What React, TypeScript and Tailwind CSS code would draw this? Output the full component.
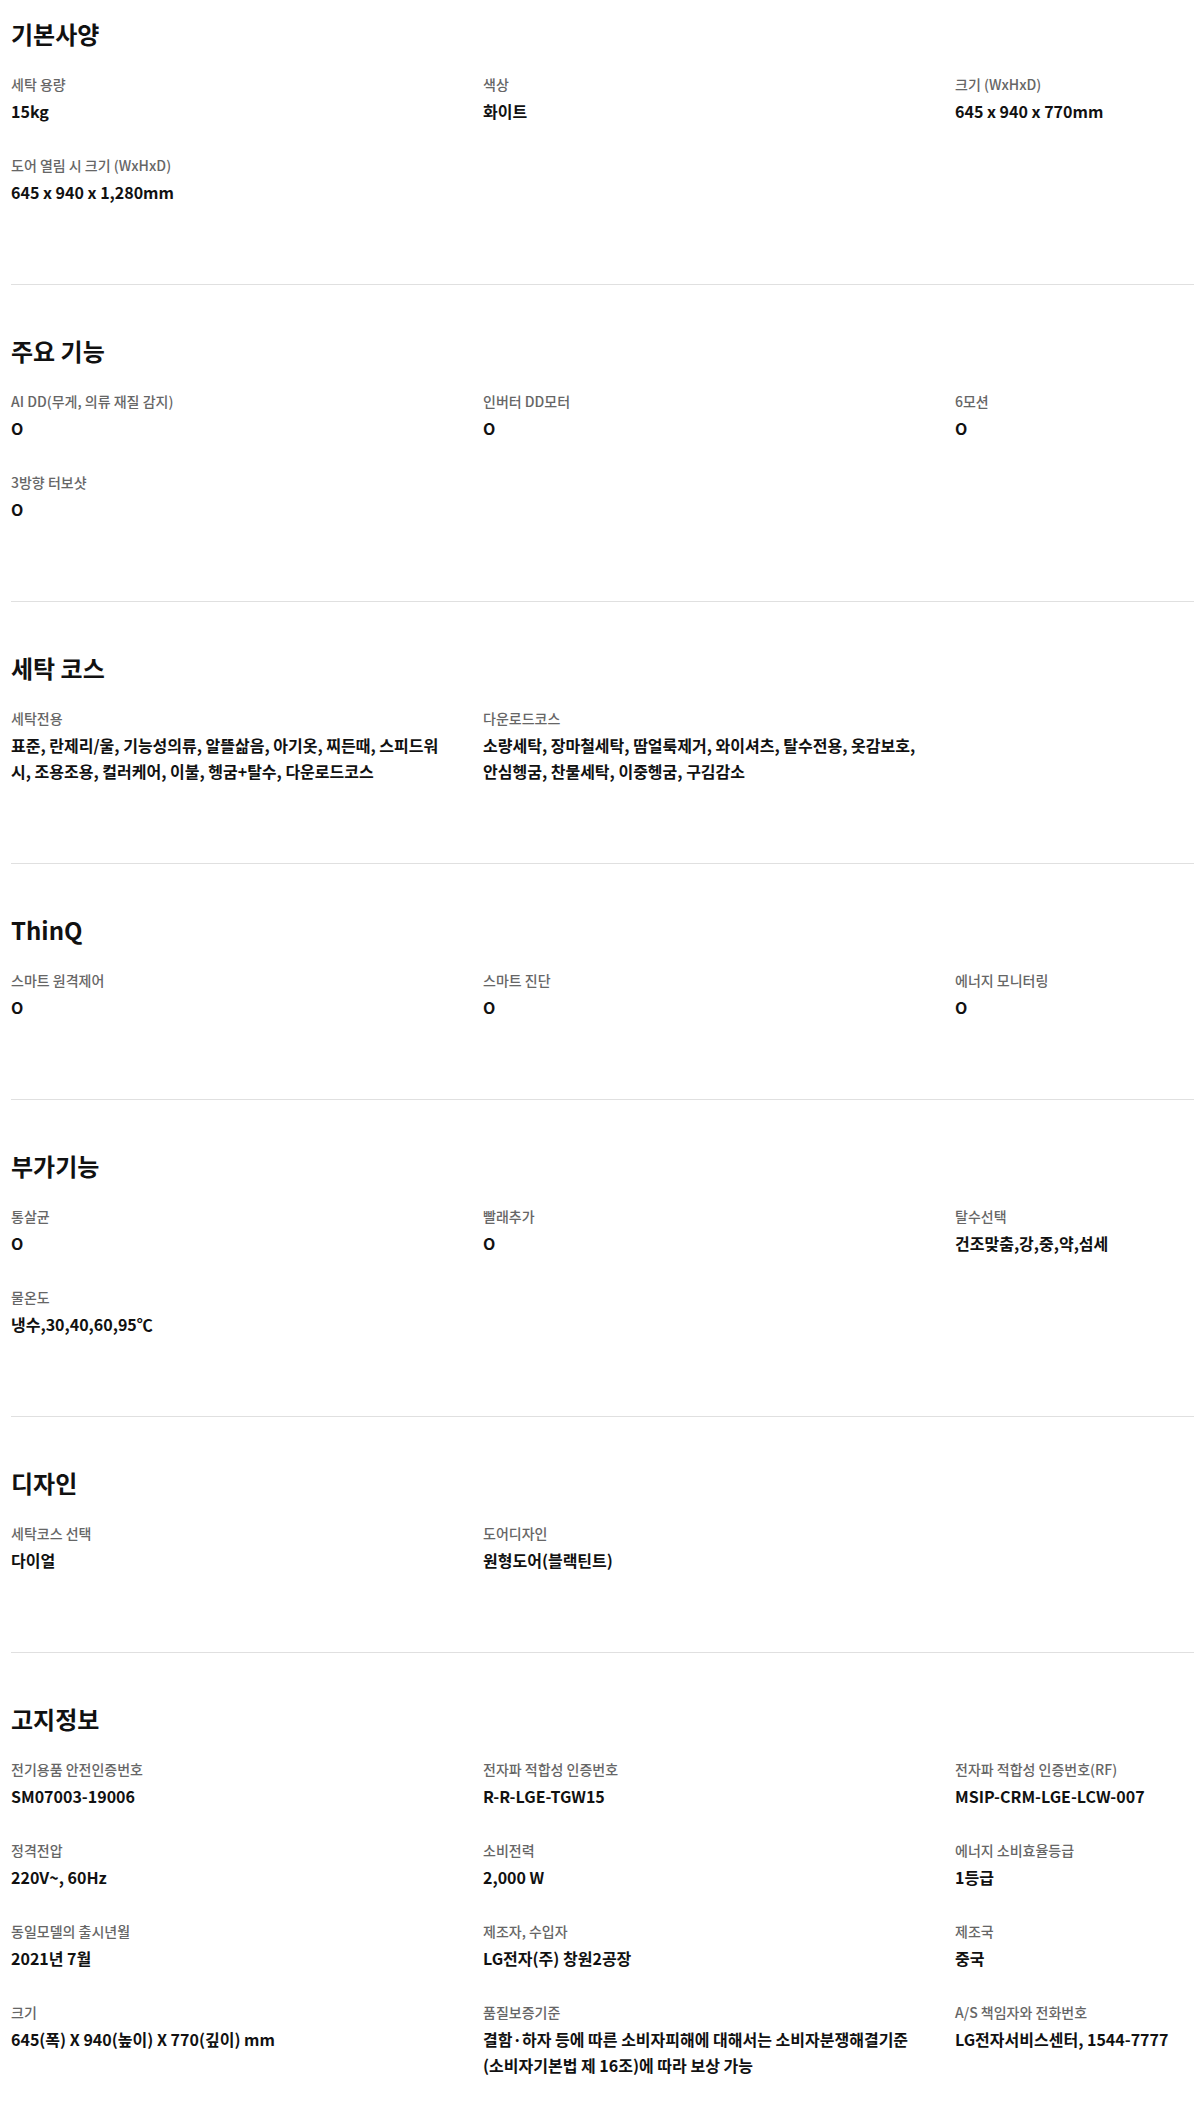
type SpecItem = {
  label: string
  value: string
}

type SpecSection = {
  title: string
  items: SpecItem[]
}

const sections: SpecSection[] = [
  {
    title: "기본사양",
    items: [
      { label: "세탁 용량", value: "15kg" },
      { label: "색상", value: "화이트" },
      { label: "크기 (WxHxD)", value: "645 x 940 x 770mm" },
      { label: "도어 열림 시 크기 (WxHxD)", value: "645 x 940 x 1,280mm" },
    ],
  },
  {
    title: "주요 기능",
    items: [
      { label: "AI DD(무게, 의류 재질 감지)", value: "O" },
      { label: "인버터 DD모터", value: "O" },
      { label: "6모션", value: "O" },
      { label: "3방향 터보샷", value: "O" },
    ],
  },
  {
    title: "세탁 코스",
    items: [
      {
        label: "세탁전용",
        value:
          "표준, 란제리/울, 기능성의류, 알뜰삶음, 아기옷, 찌든때, 스피드워시, 조용조용, 컬러케어, 이불, 헹굼+탈수, 다운로드코스",
      },
      {
        label: "다운로드코스",
        value:
          "소량세탁, 장마철세탁, 땀얼룩제거, 와이셔츠, 탈수전용, 옷감보호, 안심헹굼, 찬물세탁, 이중헹굼, 구김감소",
      },
    ],
  },
  {
    title: "ThinQ",
    items: [
      { label: "스마트 원격제어", value: "O" },
      { label: "스마트 진단", value: "O" },
      { label: "에너지 모니터링", value: "O" },
    ],
  },
  {
    title: "부가기능",
    items: [
      { label: "통살균", value: "O" },
      { label: "빨래추가", value: "O" },
      { label: "탈수선택", value: "건조맞춤,강,중,약,섬세" },
      { label: "물온도", value: "냉수,30,40,60,95℃" },
    ],
  },
  {
    title: "디자인",
    items: [
      { label: "세탁코스 선택", value: "다이얼" },
      { label: "도어디자인", value: "원형도어(블랙틴트)" },
    ],
  },
  {
    title: "고지정보",
    items: [
      { label: "전기용품 안전인증번호", value: "SM07003-19006" },
      { label: "전자파 적합성 인증번호", value: "R-R-LGE-TGW15" },
      { label: "전자파 적합성 인증번호(RF)", value: "MSIP-CRM-LGE-LCW-007" },
      { label: "정격전압", value: "220V~, 60Hz" },
      { label: "소비전력", value: "2,000 W" },
      { label: "에너지 소비효율등급", value: "1등급" },
      { label: "동일모델의 출시년월", value: "2021년 7월" },
      { label: "제조자, 수입자", value: "LG전자(주) 창원2공장" },
      { label: "제조국", value: "중국" },
      { label: "크기", value: "645(폭) X 940(높이) X 770(깊이) mm" },
      {
        label: "품질보증기준",
        value:
          "결함·하자 등에 따른 소비자피해에 대해서는 소비자분쟁해결기준(소비자기본법 제 16조)에 따라 보상 가능",
      },
      { label: "A/S 책임자와 전화번호", value: "LG전자서비스센터, 1544-7777" },
    ],
  },
]

function Section({ section, first }: { section: SpecSection; first: boolean }) {
  return (
    <section
      className={`border-b border-[#e0e0e0] pb-[79px] ${first ? "pt-[16px]" : "pt-[48px]"}`}
    >
      <h2 className="text-[24px] leading-[36px] font-bold text-[#111]">{section.title}</h2>
      <dl className="mt-[22px] grid grid-cols-[440px_440px_440px] gap-x-[32px] gap-y-[31px]">
        {section.items.map((item) => (
          <div key={item.label} className="flex flex-col gap-[4px]">
            <dt className="text-[14px] leading-[20px] font-medium text-[#666]">{item.label}</dt>
            <dd className="text-[16px] leading-[26px] font-bold text-[#111]">{item.value}</dd>
          </div>
        ))}
      </dl>
    </section>
  )
}

export default function App() {
  return (
    <div
      className="min-h-[2114px] overflow-hidden bg-white pl-[11px] [font-feature-settings:'palt']"
      style={{ fontFamily: '"Noto Sans CJK KR", "Noto Sans", sans-serif' }}
    >
      {sections.map((s, i) => (
        <Section key={s.title} section={s} first={i === 0} />
      ))}
    </div>
  )
}
